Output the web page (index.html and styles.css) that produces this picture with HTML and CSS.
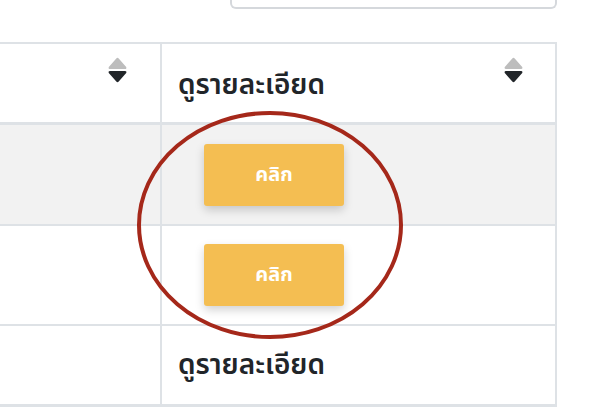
FILE: index.html
```html
<!DOCTYPE html>
<html lang="th">
<head>
<meta charset="utf-8">
<link rel="stylesheet" href="styles.css">
</head>
<body>
<div class="search"></div>
<div class="table">
  <div class="row head">
    <div class="cell col1">
      <span class="label"></span>
      <svg class="sort" width="19" height="26" viewBox="0 0 19 26"><path d="M8.3 1.4 Q9.5 0 10.7 1.4 L18.2 10 Q19 12 17 12 L2 12 Q0 12 0.8 10 Z" fill="#bdbdbd"/><path d="M2 14 L17 14 Q19 14 18.2 16 L10.7 24.6 Q9.5 26 8.3 24.6 L0.8 16 Q0 14 2 14 Z" fill="#212529"/></svg>
    </div>
    <div class="cell col2">
      <span class="label">ดูรายละเอียด</span>
      <svg class="sort" width="19" height="26" viewBox="0 0 19 26"><path d="M8.3 1.4 Q9.5 0 10.7 1.4 L18.2 10 Q19 12 17 12 L2 12 Q0 12 0.8 10 Z" fill="#bdbdbd"/><path d="M2 14 L17 14 Q19 14 18.2 16 L10.7 24.6 Q9.5 26 8.3 24.6 L0.8 16 Q0 14 2 14 Z" fill="#212529"/></svg>
    </div>
  </div>
  <div class="row body striped first">
    <div class="cell col1"></div>
    <div class="cell col2"><button class="btn">คลิก</button></div>
  </div>
  <div class="row body">
    <div class="cell col1"></div>
    <div class="cell col2"><button class="btn">คลิก</button></div>
  </div>
  <div class="row body last">
    <div class="cell col1"></div>
    <div class="cell col2 text">ดูรายละเอียด</div>
  </div>
</div>
<svg class="mark" width="596" height="420" viewBox="0 0 596 420"><ellipse cx="270" cy="225" rx="131" ry="112" fill="none" stroke="#a5281a" stroke-width="4"/></svg>
</body>
</html>
```
FILE: styles.css
```css
html, body {
  margin: 0;
  padding: 0;
  background: #ffffff;
  width: 596px;
  height: 420px;
  overflow: hidden;
  position: relative;
  font-family: "Noto Sans", "Noto Sans Thai", sans-serif;
  color: #212529;
}
.search {
  margin-left: 230px;
  width: 323px;
  height: 7px;
  border: 2px solid #d5d8dc;
  border-top: 0;
  border-radius: 0 0 6px 6px;
}
.table {
  margin-top: 33px;
  width: 557px;
  border-top: 2px solid #dee2e6;
}
.row {
  display: flex;
  border-bottom: 2px solid #dee2e6;
}
.head {
  height: 78px;
  border-bottom-width: 3px;
}
.last {
  height: 78px;
  border-bottom-width: 3px;
}
.striped {
  background: #f2f2f2;
}
.cell {
  box-sizing: border-box;
  border-right: 2px solid #dee2e6;
  padding: 0 10px;
  display: flex;
  align-items: center;
}
.col1 {
  width: 162px;
}
.col2 {
  width: 395px;
}
.head .cell {
  justify-content: space-between;
  align-items: flex-start;
  padding-top: 13px;
}
.head .col1 {
  padding-right: 33px;
}
.head .col2 {
  padding-left: 16px;
  padding-right: 32px;
}
.label {
  font-size: 28px;
  font-weight: 600;
  line-height: 1;
  margin-top: 12px;
}
.sort {
  display: block;
}
.body .col2 {
  padding: 18px 10px 18px 42px;
}
.first .col2 {
  padding-top: 19px;
}
.last .col2 {
  padding: 0 10px 0 16px;
}
.text {
  font-size: 28px;
  font-weight: 600;
}
.btn {
  width: 140px;
  height: 62px;
  border: 0;
  border-radius: 3px;
  background: #f4be52;
  color: #ffffff;
  font-family: "Noto Sans", "Noto Sans Thai", sans-serif;
  font-size: 20px;
  font-weight: 700;
  box-shadow: 0 4px 10px rgba(0, 0, 0, 0.18);
  padding: 0;
}
.mark {
  position: absolute;
  left: 0;
  top: 0;
  pointer-events: none;
}
```
